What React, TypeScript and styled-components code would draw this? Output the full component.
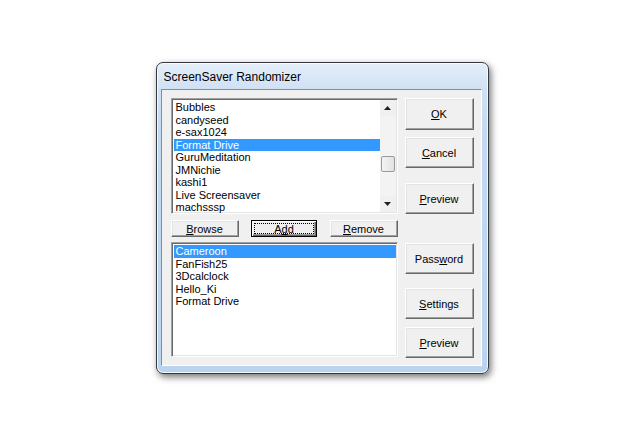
import styled, { createGlobalStyle } from 'styled-components'

const GlobalStyle = createGlobalStyle`
  html, body {
    margin: 0;
    padding: 0;
    background: #ffffff;
  }
  body {
    font-family: 'Liberation Sans', Arial, sans-serif;
  }
`

const availableSavers = [
  'Bubbles',
  'candyseed',
  'e-sax1024',
  'Format Drive',
  'GuruMeditation',
  'JMNichie',
  'kashi1',
  'Live Screensaver',
  'machsssp',
]

const chosenSavers = ['Cameroon', 'FanFish25', '3Dcalclock', 'Hello_Ki', 'Format Drive']

export default function App() {
  return (
    <>
      <GlobalStyle />
      <Desktop>
        <Window>
          <TitleBar>ScreenSaver Randomizer</TitleBar>
          <ClientEdge>
            <Client>
              <LeftColumn>
                <ListBox $height={116}>
                  <Items>
                    {availableSavers.map((name) => (
                      <Item key={name} $selected={name === 'Format Drive'}>
                        {name}
                      </Item>
                    ))}
                  </Items>
                  <ScrollBar>
                    <Arrow>
                      <svg width='7' height='4' viewBox='0 0 7 4'>
                        <path d='M0 4 L3.5 0 L7 4 Z' fill='#222' />
                      </svg>
                    </Arrow>
                    <Track>
                      <Thumb />
                    </Track>
                    <Arrow>
                      <svg width='7' height='4' viewBox='0 0 7 4'>
                        <path d='M0 0 L3.5 4 L7 0 Z' fill='#222' />
                      </svg>
                    </Arrow>
                  </ScrollBar>
                </ListBox>
                <ButtonRow>
                  <SmallButton>
                    <u>B</u>rowse
                  </SmallButton>
                  <SmallButton $default>
                    <FocusRect>
                      A<u>d</u>d
                    </FocusRect>
                  </SmallButton>
                  <SmallButton>
                    <u>R</u>emove
                  </SmallButton>
                </ButtonRow>
                <ListBox $height={115}>
                  <Items>
                    {chosenSavers.map((name, i) => (
                      <Item key={name + i} $selected={i === 0}>
                        {name}
                      </Item>
                    ))}
                  </Items>
                </ListBox>
              </LeftColumn>
              <RightColumn>
                <BigButton $top={0} $height={32}>
                  <u>O</u>K
                </BigButton>
                <BigButton $top={7}>
                  <u>C</u>ancel
                </BigButton>
                <BigButton $top={15}>
                  <u>P</u>review
                </BigButton>
                <BigButton $top={29}>
                  Pass<u>w</u>ord
                </BigButton>
                <BigButton $top={14}>
                  <u>S</u>ettings
                </BigButton>
                <BigButton $top={8}>
                  <u>P</u>review
                </BigButton>
              </RightColumn>
            </Client>
          </ClientEdge>
        </Window>
      </Desktop>
    </>
  )
}

const Desktop = styled.div`
  width: 100vw;
  height: 100vh;
  display: flex;
  align-items: center;
  justify-content: center;
`
const Window = styled.div`
  width: 331px;
  height: 310px;
  border: 1px solid #34383f;
  border-radius: 7px;
  background: linear-gradient(180deg, #e4eef9 0px, #d0e1f4 26px, #c2d9f1 70px, #bad4ef 100%);
  box-shadow: inset 0 0 0 1px rgba(255, 255, 255, 0.8), 2px 3px 7px rgba(0, 0, 0, 0.55);
  display: flex;
  flex-direction: column;
`
const TitleBar = styled.div`
  height: 25px;
  padding: 1px 0 0 7px;
  display: flex;
  align-items: center;
  font-family: 'Liberation Sans', Arial, sans-serif;
  font-size: 12px;
  color: #000;
`
const ClientEdge = styled.div`
  flex: 1;
  margin: 0 6px 7px 4px;
  border: 1px solid;
  border-color: #7f8ea0 #ffffff #ffffff #7f8ea0;
  display: flex;
`
const Client = styled.div`
  flex: 1;
  background: #f0f0f0;
  display: flex;
  padding: 8px 7px 7px 9px;
  gap: 7px;
`
const LeftColumn = styled.div`
  width: 227px;
  display: flex;
  flex-direction: column;
`
const ListBox = styled.div<{ $height: number }>`
  height: ${(p) => p.$height}px;
  box-sizing: border-box;
  background: #fff;
  border: 1px solid;
  border-color: #a0a0a0 #ffffff #ffffff #a0a0a0;
  box-shadow: inset 1px 1px 0 #696969, inset -1px -1px 0 #e3e3e3;
  padding: 2px 1px 1px 2px;
  display: flex;
  overflow: hidden;
`
const Items = styled.div`
  flex: 1;
  display: flex;
  flex-direction: column;
`
const Item = styled.div<{ $selected?: boolean }>`
  height: 12.5px;
  line-height: 12.5px;
  font-size: 11px;
  padding-left: 2px;
  white-space: nowrap;
  color: ${(p) => (p.$selected ? '#fff' : '#000')};
  background: ${(p) => (p.$selected ? '#3399ff' : 'transparent')};
`
const ScrollBar = styled.div`
  width: 16px;
  margin-top: -1px;
  background: #f0f0f0;
  display: flex;
  flex-direction: column;
`
const Arrow = styled.div`
  height: 16px;
  display: flex;
  align-items: center;
  justify-content: center;
`
const Track = styled.div`
  flex: 1;
  position: relative;
  background: #f3f3f3;
`
const Thumb = styled.div`
  position: absolute;
  left: 1px;
  right: 1px;
  top: 40px;
  height: 16px;
  border: 1px solid #9a9a9a;
  border-radius: 2px;
  background: linear-gradient(90deg, #f4f4f4, #e2e2e2);
  box-sizing: border-box;
`
const ButtonBase = styled.button`
  box-sizing: border-box;
  font-family: 'Liberation Sans', Arial, sans-serif;
  font-size: 11px;
  color: #000;
  background: #f0f0f0;
  border: 1px solid;
  border-color: #ffffff #696969 #696969 #ffffff;
  box-shadow: inset -1px -1px 0 #a0a0a0, inset 1px 1px 0 #e3e3e3;
  padding: 0;
  margin: 0;
  display: flex;
  align-items: center;
  justify-content: center;
  u {
    text-decoration: underline;
    text-underline-offset: 1px;
  }
`
const ButtonRow = styled.div`
  margin: 6px 0 5px 0;
  display: flex;
  justify-content: space-between;
`
const SmallButton = styled(ButtonBase)<{ $default?: boolean }>`
  width: ${(p) => (p.$default ? 66 : 68)}px;
  height: 17px;
  ${(p) =>
    p.$default &&
    `
    border: 1px solid #000;
    box-shadow: inset 1px 1px 0 #fff, inset -1px -1px 0 #696969, inset -2px -2px 0 #a0a0a0;
  `}
`
const FocusRect = styled.span`
  display: flex;
  align-items: center;
  justify-content: center;
  width: 58px;
  height: 9px;
  border: 1px dotted #000;
`
const RightColumn = styled.div`
  width: 69px;
  display: flex;
  flex-direction: column;
`
const BigButton = styled(ButtonBase)<{ $top: number; $height?: number }>`
  width: 69px;
  height: ${(p) => p.$height ?? 31}px;
  margin-top: ${(p) => p.$top}px;
`
